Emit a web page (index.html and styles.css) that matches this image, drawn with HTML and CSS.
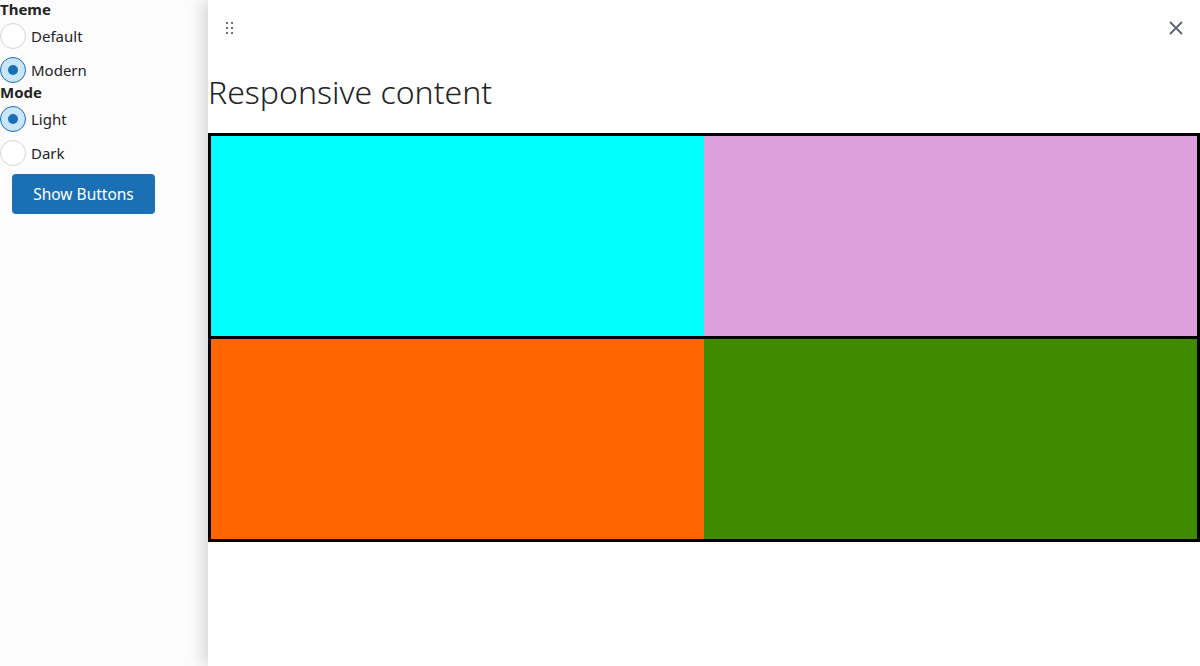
FILE: index.html
```html
<!DOCTYPE html>
<html lang="en">
<head>
    <meta charset="UTF-8">
    <meta name="viewport" content="width=device-width, initial-scale=1.0">
    <title>Responsive content</title>
    <link rel="stylesheet" href="styles.css">
</head>
<body>
    <div class="page">
        <aside class="sidebar">
            <div class="group-label">Theme</div>
            <label class="radio"><input type="radio" name="theme"><span class="dot"></span>Default</label>
            <label class="radio"><input type="radio" name="theme" checked><span class="dot"></span>Modern</label>
            <div class="group-label next">Mode</div>
            <label class="radio"><input type="radio" name="mode" checked><span class="dot"></span>Light</label>
            <label class="radio"><input type="radio" name="mode"><span class="dot"></span>Dark</label>
            <button class="btn">Show Buttons</button>
        </aside>

        <main class="panel">
            <div class="panel-header">
                <span class="handle">
                    <i></i><i></i><i></i><i></i><i></i><i></i>
                </span>
                <button class="close" aria-label="Close">
                    <svg width="16" height="16" viewBox="0 0 16 16">
                        <path d="M2 2 L14 14 M14 2 L2 14" stroke="#636873" stroke-width="2" fill="none"/>
                    </svg>
                </button>
            </div>
            <h1 class="title">Responsive content</h1>
            <div class="grid">
                <div class="grid-row">
                    <div class="cell cyan"></div>
                    <div class="cell plum"></div>
                </div>
                <div class="grid-row">
                    <div class="cell orange"></div>
                    <div class="cell green"></div>
                </div>
            </div>
        </main>
    </div>
</body>
</html>
```

FILE: styles.css
```css
* { box-sizing: border-box; }
html, body { margin: 0; height: 100%; }
body { font-family: "Noto Sans", "Open Sans", sans-serif; color: #242424; font-size: 15px; }

.page { display: flex; height: 666px; overflow: hidden; }

.sidebar { width: 208px; flex-shrink: 0; background: #fcfcfc; display: flex; flex-direction: column; align-items: flex-start; }
.group-label { font-weight: 700; font-size: 15px; line-height: 19px; height: 19px; }
.group-label.next { margin-top: -4px; }
.radio { display: flex; align-items: center; height: 34px; cursor: pointer; }
.radio input { display: none; }
.radio .dot { width: 26px; height: 26px; border-radius: 50%; border: 1px solid #d6d6d6; background: #fff; margin-right: 5px; position: relative; }
.radio input:checked + .dot { background: #c9e6fb; border-color: #1a6fb5; }
.radio input:checked + .dot::after { content: ""; position: absolute; left: 7px; top: 7px; width: 10px; height: 10px; border-radius: 50%; background: #1a6fb5; }

.btn { margin: 4px 0 0 12px; width: 143px; height: 40px; border: none; border-radius: 4px; background: #1a6fb5; color: #fff; font-family: inherit; font-size: 15.5px; }

.panel { flex: 1; background: #fff; box-shadow: -6px 0 14px rgba(0, 0, 0, 0.14); position: relative; }
.panel-header { display: flex; justify-content: space-between; align-items: center; height: 56px; padding: 0 12px 0 18px; }
.handle { display: grid; grid-template-columns: 2px 2px; gap: 3px; }
.handle i { width: 2px; height: 2px; background: #6b6f7a; }
.close { border: none; background: none; padding: 0; width: 24px; height: 24px; display: flex; align-items: center; justify-content: center; }

.title { margin: 16px 0 21px; font-weight: 300; font-size: 32px; line-height: 40px; color: #242424; }

.grid { border: 3px solid #000; }
.grid-row { display: flex; }
.grid-row + .grid-row { border-top: 3px solid #000; }
.cell { flex: 1; height: 200px; }
.cyan { background: #00ffff; }
.plum { background: #dda0dd; }
.orange { background: #ff6600; }
.green { background: #408a00; }
```
